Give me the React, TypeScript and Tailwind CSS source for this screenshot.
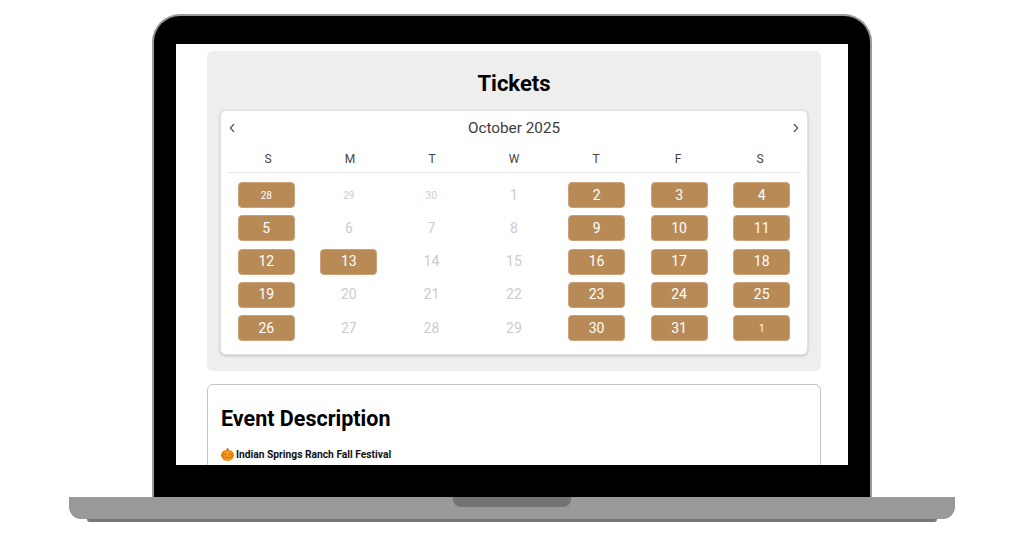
import React from "react";
import { ChevronLeft, ChevronRight } from "lucide-react";

type Day = { label: number; active: boolean; small?: boolean };

const weekdays = ["S", "M", "T", "W", "T", "F", "S"];

const weeks: Day[][] = [
  [
    { label: 28, active: true, small: true },
    { label: 29, active: false, small: true },
    { label: 30, active: false, small: true },
    { label: 1, active: false },
    { label: 2, active: true },
    { label: 3, active: true },
    { label: 4, active: true },
  ],
  [
    { label: 5, active: true },
    { label: 6, active: false },
    { label: 7, active: false },
    { label: 8, active: false },
    { label: 9, active: true },
    { label: 10, active: true },
    { label: 11, active: true },
  ],
  [
    { label: 12, active: true },
    { label: 13, active: true },
    { label: 14, active: false },
    { label: 15, active: false },
    { label: 16, active: true },
    { label: 17, active: true },
    { label: 18, active: true },
  ],
  [
    { label: 19, active: true },
    { label: 20, active: false },
    { label: 21, active: false },
    { label: 22, active: false },
    { label: 23, active: true },
    { label: 24, active: true },
    { label: 25, active: true },
  ],
  [
    { label: 26, active: true },
    { label: 27, active: false },
    { label: 28, active: false },
    { label: 29, active: false },
    { label: 30, active: true },
    { label: 31, active: true },
    { label: 1, active: true, small: true },
  ],
];

const Pumpkin = () => (
  <svg viewBox="0 0 24 24" className="w-[13px] h-[13px] shrink-0">
    <ellipse cx="12" cy="13.5" rx="12" ry="10.5" fill="#e8820e" />
    <ellipse cx="12" cy="13.5" rx="6.5" ry="10.5" fill="#f79a1c" />
    <path d="M10.5 4 L11 0.5 L14 1 L13.5 4 Z" fill="#5a6b22" />
    <path d="M7 10.5 L10 12.5 L7 13.5 Z M17 10.5 L14 12.5 L17 13.5 Z" fill="#8a4a00" />
    <path d="M6.5 16 Q12 21 17.5 16 Q12 18 6.5 16 Z" fill="#8a4a00" />
  </svg>
);

const DayCell = ({ day }: { day: Day }) => (
  <div className="flex justify-center">
    {day.active ? (
      <div
        className={`w-[57px] h-[26px] rounded-[4px] bg-[#b88a56] border border-[#c9a27a] text-white flex items-center justify-center ${
          day.small ? "text-[10px]" : "text-[14px]"
        }`}
      >
        {day.label}
      </div>
    ) : (
      <div
        className={`w-[57px] h-[26px] text-[#cccccc] flex items-center justify-center ${
          day.small ? "text-[10px]" : "text-[14px]"
        }`}
      >
        {day.label}
      </div>
    )}
  </div>
);

export default function App() {
  return (
    <div className="w-[1024px] h-[536px] bg-white overflow-hidden flex flex-col items-center pt-[14px] font-['Roboto',sans-serif]">
      {/* Tapa del portátil */}
      <div className="w-[720px] h-[483px] shrink-0 bg-black rounded-t-[28px] border-t-2 border-x-2 border-[#9a9a9a] pt-[28px] px-[22px]">
        <div className="w-[672px] h-[421px] bg-white overflow-hidden pl-[31px] pr-[27px] pt-[7px]">
          <section className="h-[320px] bg-[#eeeeee] rounded-[6px] px-[13px] pt-[18px]">
            <h2 className="text-center text-[22px] leading-[30px] font-bold text-black">
              Tickets
            </h2>
            <div className="mt-[11px] h-[245px] bg-white rounded-[6px] border border-[#e2e2e2] shadow-[0_1px_3px_rgba(0,0,0,0.2)] px-[4px]">
              <div className="h-[34px] flex items-center justify-between">
                <ChevronLeft className="w-[14px] h-[14px] text-[#555555]" />
                <span className="text-[15.3px] text-[#3c3c3c]">October 2025</span>
                <ChevronRight className="w-[14px] h-[14px] text-[#555555]" />
              </div>
              <div className="mx-[2px] h-[28px] grid grid-cols-7 items-center border-b border-[#e6e6e6] text-[12px] text-[#444444]">
                {weekdays.map((w, i) => (
                  <div key={i} className="text-center">
                    {w}
                  </div>
                ))}
              </div>
              <div className="mt-[9px] flex flex-col gap-[7.25px]">
                {weeks.map((week, i) => (
                  <div key={i} className="grid grid-cols-7">
                    {week.map((d, j) => (
                      <DayCell key={j} day={d} />
                    ))}
                  </div>
                ))}
              </div>
            </div>
          </section>

          <section className="mt-[13px] h-[200px] rounded-[6px] border border-[#c4c4c4] bg-white px-[13px] pt-[20px]">
            <h2 className="text-[21.5px] leading-[28px] font-bold text-black">
              Event Description
            </h2>
            <div className="mt-[14px] flex items-center gap-[2px] text-[10.25px] font-bold text-[#111111]">
              <Pumpkin />
              <span>Indian Springs Ranch Fall Festival</span>
            </div>
          </section>
        </div>
      </div>

      {/* Base */}
      <div className="w-[886px] h-[22px] shrink-0 bg-[#999999] rounded-b-[12px] flex justify-center">
        <div className="w-[118px] h-[10px] bg-[#737373] rounded-b-[8px]" />
      </div>
      <div className="w-[850px] h-[3px] shrink-0 bg-[#777777] rounded-b-[3px]" />
    </div>
  );
}
